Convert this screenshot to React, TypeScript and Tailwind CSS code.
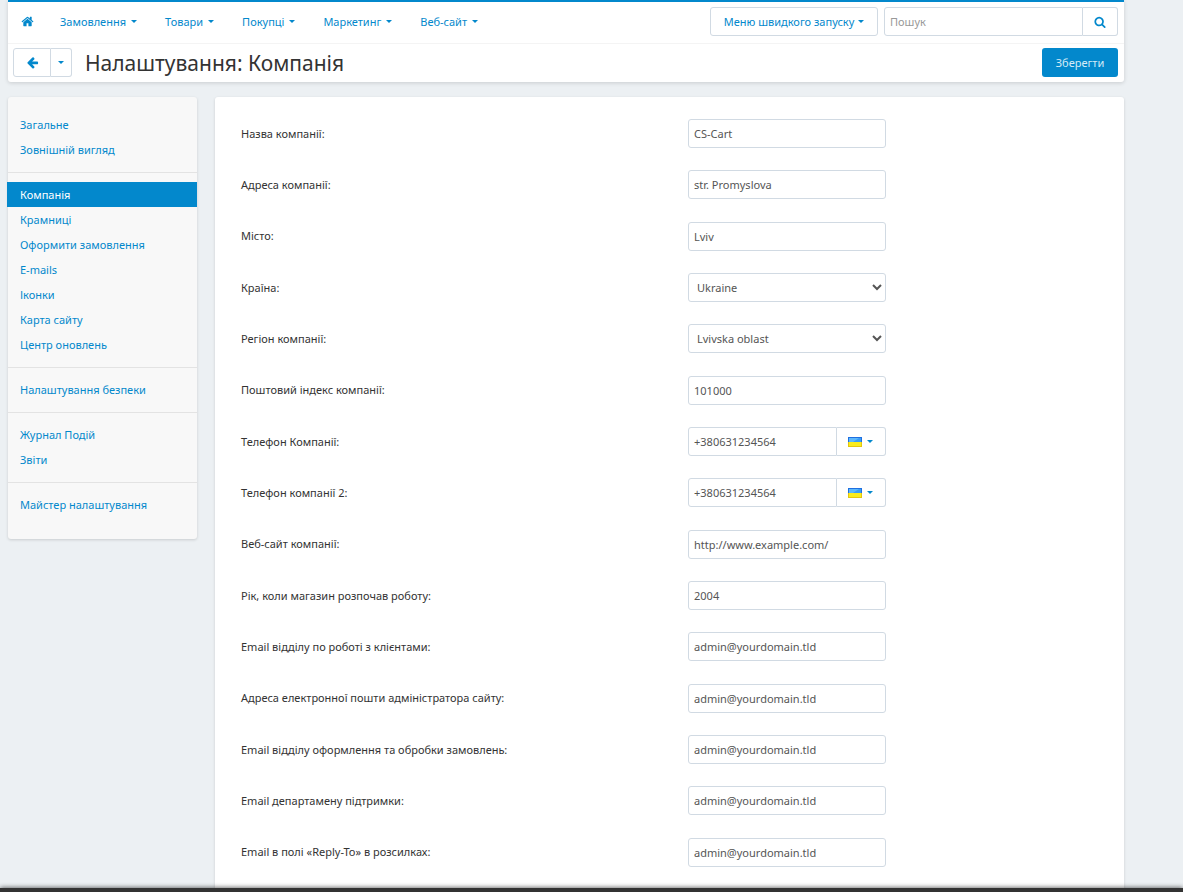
import React from 'react';

interface Field {
  id: string;
  label: string;
  value: string;
  type?: 'text' | 'select' | 'phone';
}

const NAV_ITEMS = ['Замовлення', 'Товари', 'Покупці', 'Маркетинг', 'Веб-сайт'];

const SIDEBAR_GROUPS = [
  ['Загальне', 'Зовнішній вигляд'],
  ['Компанія', 'Крамниці', 'Оформити замовлення', 'E-mails', 'Іконки', 'Карта сайту', 'Центр оновлень'],
  ['Налаштування безпеки'],
  ['Журнал Подій', 'Звіти'],
  ['Майстер налаштування'],
];

const ACTIVE_ITEM = 'Компанія';

const FIELDS: Field[] = [
  { id: 'company_name', label: 'Назва компанії:', value: 'CS-Cart' },
  { id: 'company_address', label: 'Адреса компанії:', value: 'str. Promyslova' },
  { id: 'company_city', label: 'Місто:', value: 'Lviv' },
  { id: 'company_country', label: 'Країна:', value: 'Ukraine', type: 'select' },
  { id: 'company_state', label: 'Регіон компанії:', value: 'Lvivska oblast', type: 'select' },
  { id: 'company_zipcode', label: 'Поштовий індекс компанії:', value: '101000' },
  { id: 'company_phone', label: 'Телефон Компанії:', value: '+380631234564', type: 'phone' },
  { id: 'company_phone_2', label: 'Телефон компанії 2:', value: '+380631234564', type: 'phone' },
  { id: 'company_website', label: 'Веб-сайт компанії:', value: 'http://www.example.com/' },
  { id: 'company_start_year', label: 'Рік, коли магазин розпочав роботу:', value: '2004' },
  { id: 'users_department', label: 'Email відділу по роботі з клієнтами:', value: 'admin@yourdomain.tld' },
  { id: 'site_administrator', label: 'Адреса електронної пошти адміністратора сайту:', value: 'admin@yourdomain.tld' },
  { id: 'orders_department', label: 'Email відділу оформлення та обробки замовлень:', value: 'admin@yourdomain.tld' },
  { id: 'support_department', label: 'Email департамену підтримки:', value: 'admin@yourdomain.tld' },
  { id: 'newsletter_email', label: 'Email в полі «Reply-To» в розсилках:', value: 'admin@yourdomain.tld' },
];

function Caret() {
  return (
    <svg viewBox="0 0 6 3" className="w-[6px] h-[3px] shrink-0" fill="currentColor" aria-hidden="true">
      <path d="M0 0h6L3 3z" />
    </svg>
  );
}

function HomeIcon() {
  return (
    <svg viewBox="0 0 1792 1792" className="size-[13px]" fill="currentColor" aria-hidden="true">
      <path d="M1472 992v480q0 26-19 45t-45 19h-384v-384h-256v384h-384q-26 0-45-19t-19-45v-480q0-1 .5-3t.5-3l575-474 575 474q1 2 1 6zm223-69l-62 74q-8 9-21 11h-3q-13 0-21-7l-692-577-692 577q-12 8-24 7-13-2-21-11l-62-74q-8-10-7-23.5t11-21.5l719-599q32-26 76-26t76 26l244 204v-195q0-14 9-23t23-9h192q14 0 23 9t9 23v408l219 182q10 8 11 21.5t-7 23.5z" />
    </svg>
  );
}

function ArrowLeftIcon() {
  return (
    <svg viewBox="0 0 1792 1792" className="size-[13px]" fill="currentColor" aria-hidden="true">
      <path d="M1664 896v128q0 53-32.5 90.5t-84.5 37.5h-704l293 294q38 36 38 90t-38 90l-75 76q-37 37-90 37-52 0-91-37l-651-652q-37-37-37-90 0-52 37-91l651-650q38-38 91-38 52 0 90 38l75 74q38 38 38 91t-38 91l-293 293h704q52 0 84.5 37.5t32.5 90.5z" />
    </svg>
  );
}

function SearchIcon() {
  return (
    <svg viewBox="0 0 1792 1792" className="size-[12px]" fill="currentColor" aria-hidden="true">
      <path d="M1216 832q0-185-131.5-316.5t-316.5-131.5-316.5 131.5-131.5 316.5 131.5 316.5 316.5 131.5 316.5-131.5 131.5-316.5zm512 832q0 52-38 90t-90 38q-54 0-90-38l-343-342q-179 124-399 124-143 0-273.5-55.5t-225-150-150-225-55.5-273.5 55.5-273.5 150-225 225-150 273.5-55.5 273.5 55.5 225 150 150 225 55.5 273.5q0 220-124 399l343 343q37 37 37 90z" />
    </svg>
  );
}

function UkraineFlag() {
  return (
    <svg viewBox="0 0 14 10" className="w-[14px] h-[10px]" aria-hidden="true">
      <rect width="14" height="5" fill="#1f6fe0" />
      <rect x="1" y="1" width="12" height="4" fill="#3a9cf6" />
      <path d="M1 1h10L5 5H1z" fill="#5db8fb" />
      <rect y="5" width="14" height="5" fill="#e3c60f" />
      <rect x="1" y="5" width="12" height="4" fill="#fbec1c" />
    </svg>
  );
}

function Header() {
  return (
    <header className="bg-white border-t-2 border-[#0388cc] rounded-b-[3px] shadow-[0_1px_4px_rgba(0,0,0,0.15)]">
      <div className="flex items-start justify-between h-[42px] pt-[5px] pl-[13px] pr-[6px] border-b border-[#f4f4f4]">
        <nav className="flex items-center gap-[26px] h-[29px] text-[#0388cc]">
          <a href="#" aria-label="Home">
            <HomeIcon />
          </a>
          <div className="flex gap-[28px]">
            {NAV_ITEMS.map(item => (
              <a key={item} href="#" className="flex items-center gap-[5px] whitespace-nowrap">
                {item}
                <Caret />
              </a>
            ))}
          </div>
        </nav>
        <div className="flex gap-[6px]">
          <button className="flex items-center justify-center gap-[4px] w-[168px] h-[29px] border border-[#d1dae3] rounded-[3px] text-[#0388cc] whitespace-nowrap">
            Меню швидкого запуску
            <Caret />
          </button>
          <form className="flex h-[29px]">
            <input
              type="text"
              placeholder="Пошук"
              aria-label="Пошук"
              className="w-[199px] px-[5px] border border-[#d1dae3] rounded-l-[3px] placeholder:text-[#999999] outline-none"
            />
            <button
              type="button"
              aria-label="Search"
              className="flex items-center justify-center w-[35px] border border-l-0 border-[#d1dae3] rounded-r-[3px] text-[#0388cc]"
            >
              <SearchIcon />
            </button>
          </form>
        </div>
      </div>
      <div className="flex items-start justify-between h-[38px] pt-[4px] pl-[5px] pr-[6px]">
        <div className="flex items-center h-[29px]">
          <div className="flex h-[29px] text-[#0388cc]">
            <a
              href="#"
              aria-label="Back"
              className="flex items-center justify-center w-[38px] border border-[#d1dae3] rounded-l-[3px]"
            >
              <ArrowLeftIcon />
            </a>
            <button
              aria-label="History"
              className="flex items-center justify-center w-[21px] border border-l-0 border-[#d1dae3] rounded-r-[3px]"
            >
              <Caret />
            </button>
          </div>
          <h1 className="ml-[13px] text-[21px] leading-[28px] text-[#333333]">Налаштування: Компанія</h1>
        </div>
        <button className="w-[76px] h-[29px] rounded-[3px] bg-[#0388cc] text-[#d5ebf7]">Зберегти</button>
      </div>
    </header>
  );
}

function Sidebar() {
  return (
    <aside className="w-[189px] shrink-0 self-start pt-[15px] pb-[22px] bg-[#f8f8f8] rounded-[3px] shadow-[0_1px_3px_rgba(0,0,0,0.15)]">
      {SIDEBAR_GROUPS.map((group, index) => (
        <ul key={group[0]} className={index > 0 ? 'mt-[10px] pt-[9px] border-t border-[#e3e3e3]' : ''}>
          {group.map(item => (
            <li key={item}>
              <a
                href="#"
                className={
                  item === ACTIVE_ITEM
                    ? 'block -ml-px pl-[13px] leading-[25px] bg-[#0388cc] text-white'
                    : 'block pl-[12px] leading-[25px] text-[#0388cc]'
                }
              >
                {item}
              </a>
            </li>
          ))}
        </ul>
      ))}
    </aside>
  );
}

function FieldControl({ field }: { field: Field }) {
  if (field.type === 'select') {
    return (
      <select
        id={field.id}
        className="w-[198px] h-[29px] px-[4px] border border-[#d1dae3] rounded-[3px] bg-white text-[#555555]"
      >
        <option>{field.value}</option>
      </select>
    );
  }

  if (field.type === 'phone') {
    return (
      <div className="flex w-[198px] h-[29px]">
        <input
          id={field.id}
          type="tel"
          defaultValue={field.value}
          className="w-[149px] px-[5px] border border-[#d1dae3] rounded-l-[3px] text-[#555555]"
        />
        <button
          type="button"
          aria-label="Country code"
          className="flex flex-1 items-center pl-[11px] gap-[5px] border border-l-0 border-[#d1dae3] rounded-r-[3px] text-[#0388cc]"
        >
          <UkraineFlag />
          <Caret />
        </button>
      </div>
    );
  }

  return (
    <input
      id={field.id}
      type="text"
      defaultValue={field.value}
      className="w-[198px] h-[29px] px-[5px] border border-[#d1dae3] rounded-[3px] text-[#555555]"
    />
  );
}

export default function App() {
  return (
    <div className="flex flex-col min-h-screen pl-[8px] pr-[59px] bg-[#ecf0f3] font-['Noto_Sans',sans-serif] text-[11px] leading-[16px]">
      <Header />
      <div className="flex flex-1 gap-[18px] mt-[15px]">
        <Sidebar />
        <main className="flex flex-1 bg-white rounded-t-[3px] shadow-[0_1px_3px_rgba(0,0,0,0.15)]">
          <form className="flex flex-col flex-1 justify-between gap-[22px] pt-[22px] px-[26px] pb-[25px]">
            {FIELDS.map(field => (
              <div key={field.id} className="flex items-center">
                <label htmlFor={field.id} className="flex-1 text-[#333333]">
                  {field.label}
                </label>
                <div className="w-[410px]">
                  <FieldControl field={field} />
                </div>
              </div>
            ))}
          </form>
        </main>
      </div>
      <footer className="fixed inset-x-0 bottom-0 h-[4px] bg-[#333333] shadow-[0_0_5px_rgba(0,0,0,0.8)]" />
    </div>
  );
}
